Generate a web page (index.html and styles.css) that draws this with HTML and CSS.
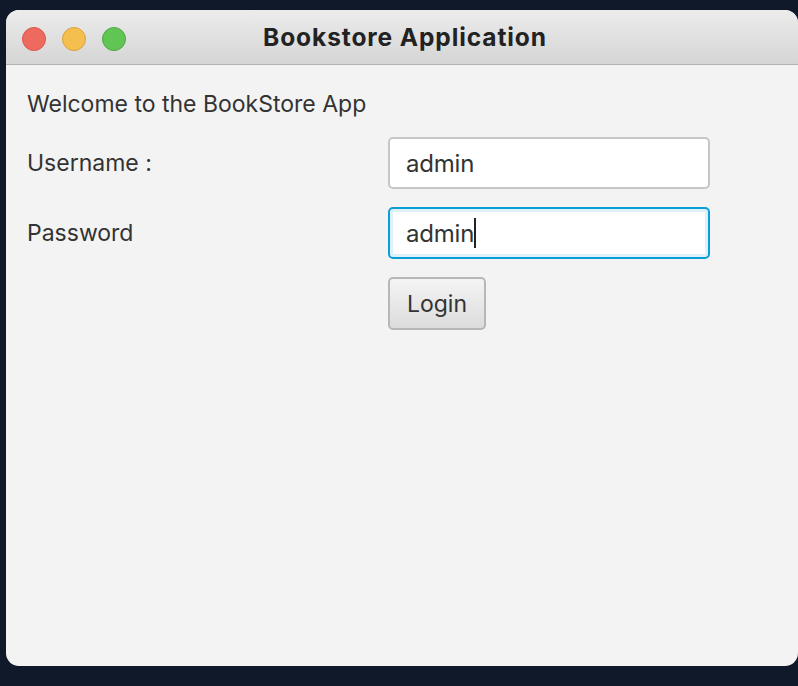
FILE: index.html
```html
<!DOCTYPE html>
<html>
<head>
<meta charset="utf-8">
<link rel="stylesheet" href="styles.css">
</head>
<body>
<div class="window">
  <div class="titlebar">
    <div class="lights">
      <span class="light red"></span>
      <span class="light yellow"></span>
      <span class="light green"></span>
    </div>
    <div class="title">Bookstore Application</div>
  </div>
  <div class="content">
    <div class="welcome">Welcome to the BookStore App</div>
    <div class="form">
      <div class="label">Username :</div>
      <div class="field">admin</div>
      <div class="label">Password</div>
      <div class="field focused">admin<span class="caret"></span></div>
      <div></div>
      <div><button class="btn">Login</button></div>
    </div>
  </div>
</div>
</body>
</html>
```
FILE: styles.css
```css
html, body {
  margin: 0;
  padding: 0;
  height: 100%;
}
body {
  background: #0f1929;
  font-family: "Inter", "Open Sans", sans-serif;
  overflow: hidden;
}
.window {
  margin: 10px 0 0 6px;
  width: 792px;
  height: 656px;
  background: #f3f3f3;
  border-radius: 13px;
  overflow: hidden;
  display: flex;
  flex-direction: column;
}
.titlebar {
  height: 54px;
  flex: none;
  background: linear-gradient(#ececec, #d5d5d5);
  border-bottom: 1px solid #b4b4b4;
  position: relative;
  display: flex;
  align-items: center;
  justify-content: center;
}
.lights {
  position: absolute;
  left: 16px;
  top: 17px;
  display: flex;
  gap: 16px;
}
.light {
  width: 24px;
  height: 24px;
  border-radius: 50%;
  box-sizing: border-box;
}
.red { background: #ee6a5f; border: 1px solid #d7564c; }
.yellow { background: #f5bf4f; border: 1px solid #d9a23b; }
.green { background: #61c554; border: 1px solid #4ea942; }
.title {
  font-family: "Inter", "Open Sans", sans-serif;
  font-weight: 700;
  font-size: 24.5px;
  letter-spacing: 0.9px;
  color: #222;
  margin-left: 6px;
  margin-top: -1px;
}
.content {
  padding: 24px 0 0 21px;
  color: #333;
}
.welcome {
  font-size: 23px;
  line-height: 30px;
}
.form {
  margin-top: 18px;
  display: grid;
  grid-template-columns: 361px 322px;
  row-gap: 18px;
  align-items: center;
}
.label {
  font-size: 23px;
}
.field {
  box-sizing: border-box;
  height: 52px;
  background: #fff;
  border: 2px solid #c6c6c6;
  border-radius: 5px;
  font-size: 24px;
  padding-left: 16px;
  display: flex;
  align-items: center;
  letter-spacing: -0.2px;
}
.field.focused {
  border: 2px solid #0a9ed8;
  box-shadow: inset 0 0 0 3px #def1f9;
}
.caret {
  display: inline-block;
  width: 2px;
  height: 30px;
  background: #222;
  margin-left: 0px;
}
.btn {
  box-sizing: border-box;
  width: 98px;
  height: 53px;
  background: linear-gradient(#f4f4f4, #dcdcdc);
  border: 2px solid #b7b7b7;
  border-radius: 5px;
  font-family: "Inter", sans-serif;
  font-size: 23px;
  color: #333;
  padding: 0;
}
```
